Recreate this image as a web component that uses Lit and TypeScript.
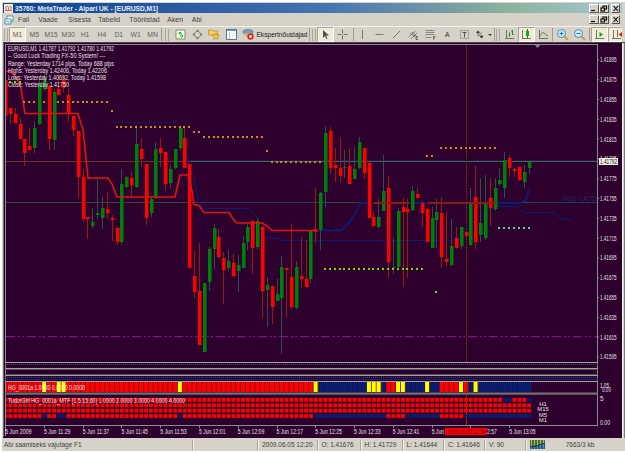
import {LitElement, html, svg, css} from 'lit';
import {customElement, property} from 'lit/decorators.js';
import {classMap} from 'lit/directives/class-map.js';

// direction, high, body top, body bottom, low
type Candle = [string, number, number, number, number];

const CANDLES: Candle[] = [
  ['r', 74, 80, 116, 116], ['r', 108, 108, 114, 124], ['r', 108, 114, 123, 123],
  ['r', 118, 124, 139, 139], ['r', 139, 139, 153, 166], ['r', 128, 146, 150, 150],
  ['g', 121, 128, 148, 153], ['g', 77, 84, 124, 125], ['g', 73, 79, 89, 91],
  ['r', 84, 86, 139, 150], ['g', 89, 92, 140, 150], ['r', 74, 89, 95, 95],
  ['r', 74, 80, 88, 92], ['r', 88, 95, 114, 122], ['r', 116, 116, 130, 136],
  ['r', 131, 131, 177, 198], ['r', 169, 177, 219, 222], ['r', 217, 217, 219, 239],
  ['g', 208, 222, 226, 228], ['g', 179, 213, 215, 219], ['g', 197, 208, 218, 229],
  ['r', 192, 209, 213, 219], ['r', 215, 218, 220, 241], ['r', 227, 228, 242, 245],
  ['g', 169, 184, 242, 245], ['g', 176, 177, 187, 188], ['r', 172, 178, 185, 196],
  ['g', 125, 144, 187, 188], ['r', 138, 149, 159, 167], ['r', 164, 164, 218, 225],
  ['g', 196, 199, 213, 217], ['g', 142, 149, 198, 199], ['r', 138, 148, 153, 167],
  ['r', 152, 152, 184, 190], ['g', 165, 169, 183, 188], ['g', 149, 149, 168, 169],
  ['g', 126, 128, 148, 150], ['r', 127, 138, 168, 168], ['r', 164, 164, 268, 268],
  ['r', 251, 276, 292, 298], ['r', 243, 291, 345, 345], ['g', 283, 283, 352, 352],
  ['g', 247, 249, 282, 291], ['g', 224, 228, 249, 269], ['r', 229, 237, 257, 258],
  ['r', 252, 258, 270, 304], ['g', 250, 261, 268, 271], ['r', 254, 263, 276, 277],
  ['g', 255, 265, 271, 292], ['g', 236, 243, 268, 268], ['g', 224, 227, 242, 250],
  ['r', 220, 221, 248, 274], ['g', 218, 221, 247, 249], ['r', 226, 227, 291, 318],
  ['g', 277, 285, 290, 327], ['r', 286, 286, 307, 324], ['g', 279, 294, 301, 301],
  ['g', 256, 267, 298, 354], ['r', 268, 268, 270, 317], ['r', 224, 277, 307, 309],
  ['g', 261, 267, 308, 309], ['r', 237, 276, 279, 288], ['r', 240, 279, 287, 287],
  ['g', 230, 231, 279, 283], ['r', 188, 229, 232, 243], ['g', 192, 193, 230, 250],
  ['g', 126, 133, 192, 207], ['r', 127, 131, 168, 174], ['r', 148, 165, 168, 182],
  ['r', 138, 168, 176, 182], ['g', 150, 167, 168, 178], ['r', 148, 166, 184, 184],
  ['g', 147, 169, 179, 179], ['g', 137, 142, 168, 169], ['r', 148, 148, 173, 179],
  ['r', 162, 163, 218, 218], ['r', 211, 217, 226, 227], ['g', 199, 217, 227, 228],
  ['g', 155, 191, 211, 211], ['r', 176, 188, 262, 277], ['g', 238, 267, 268, 274],
  ['g', 208, 211, 267, 268], ['r', 198, 207, 212, 287], ['r', 199, 209, 212, 278],
  ['g', 186, 191, 210, 211], ['r', 188, 194, 198, 198], ['r', 201, 203, 213, 227],
  ['r', 208, 209, 242, 242], ['g', 207, 218, 248, 248], ['g', 199, 212, 220, 248],
  ['r', 197, 213, 257, 268], ['r', 212, 259, 262, 266], ['g', 219, 246, 265, 266],
  ['r', 227, 238, 248, 248], ['g', 227, 227, 246, 249], ['r', 232, 232, 236, 237],
  ['g', 188, 203, 245, 246], ['r', 166, 197, 242, 249], ['g', 178, 223, 235, 242],
  ['g', 175, 203, 238, 240], ['r', 178, 198, 208, 226], ['g', 178, 188, 209, 211],
  ['g', 168, 180, 184, 185], ['g', 152, 160, 188, 198], ['r', 155, 158, 168, 177],
  ['r', 168, 169, 171, 177], ['r', 167, 167, 180, 181], ['g', 165, 172, 182, 188],
  ['g', 162, 162, 168, 174],
];

const STEP = 4.847;
const barX = (i: number) => 5.6 + i * STEP;

// y, first bar, last bar
const ORANGE = [
  [101.5, 4, 6], [101.5, 8, 8], [101.5, 11, 21], [110.5, 22, 22], [127, 23, 38],
  [132, 39, 40], [137, 41, 53], [150.5, 54, 54], [162, 55, 65], [156, 87, 88],
  [148, 90, 101],
];
const LIME = [[82, 1, 3], [268.5, 66, 86], [291.5, 89, 89]];
const AQUA = [[227.5, 102, 108]];

const YELLOW_BARS = [8, 11, 12, 36, 64, 75, 76, 77, 81, 82, 87, 94, 97];
const RED_BARS = [79, 80, 90, 91, 92, 93, 95];

const barColor = (i: number) =>
  YELLOW_BARS.includes(i) ? '#ff0' : i < 64 || RED_BARS.includes(i) ? '#f00' : '#0a1c6c';

const isRed = (row: number, i: number) => {
  if (row === 0) return ![103, 104, 108].includes(i);
  if (row < 3) return true;
  return (i < 64 && ![8, 11, 12, 36].includes(i)) || (i > 78 && i < 83) || (i > 89 && i < 95);
};

// one label for every eighth bar
const TIMES = ['2009', '11:29', '11:37', '11:45', '11:53', '12:01', '12:09', '12:17',
  '12:25', '12:33', '12:41', '12:49', '12:57', '13:05'];

const INFO: [string, number][] = [
  ['EURUSD,M1  1.41787 1.41792 1.41780 1.41792', 106],
  ['-- Good Luck Trading FX-50 System! ---', 97],
  ['Range: Yesterday 1714 pips, Today 688 pips', 106],
  ['Highs: Yesterday 1.42406, Today 1.42206', 99],
  ['Lows: Yesterday 1.40692, Today 1.41598', 98],
  ['Close: Yesterday 1.41750', 61],
];

@customElement('price-chart')
class PriceChart extends LitElement {
  static override styles = css`
    :host {
      display: block;
      background: #2e002e;
      overflow: hidden;
    }

    svg {
      display: block;
    }

    text {
      font-family: 'Liberation Sans', Arial, sans-serif;
      font-size: 6.3px;
      fill: #e4e4e4;
    }

    .line {
      fill: none;
    }

    .blue {
      stroke: #0a1e74;
    }

    .frame {
      stroke: #84908c;
      fill: none;
    }

    .crisp {
      shape-rendering: crispEdges;
    }

    .timeframe {
      font-size: 6px;
    }

    .level {
      fill: #1c3468;
    }

    .current {
      fill: #000;
    }

    .marked {
      fill: #7a0808;
    }
  `;

  private candle([dir, high, top, bottom, low]: Candle, i: number) {
    const x = Math.floor(barX(i));
    const left = Math.max(6, x - 1);
    const up = dir === 'g';
    return svg`
      <rect x=${x} y=${high} width="1" height=${low - high} fill=${up ? '#2c5048' : '#961a10'}></rect>
      <rect x=${left} y=${top} width=${x + 2 - left} height=${Math.max(1, bottom - top)}
        fill=${up ? '#008000' : '#f00'}></rect>
      <rect x=${x + 2} y=${top} width="1" height=${Math.max(1, bottom - top)}
        fill=${up ? '#0b4434' : '#8c0c10'}></rect>
    `;
  }

  private dots(rows: number[][], color: string) {
    return rows.map(([y, from, to]) =>
      Array.from({length: to - from + 1}, (_, n) => svg`
        <rect x=${Math.floor(barX(from + n)) - 1} y=${Math.round(y) - 1} width="2" height="2" fill=${color}></rect>
      `)
    );
  }

  private histogram() {
    return CANDLES.map((_, i) => svg`
      <rect x=${Math.max(6, barX(i) - 2.2)} y="382" width=${i ? STEP : 2.3} height="10" fill=${barColor(i)}></rect>
      ${barColor(i) === '#0a1c6c' ? '' : svg`
        <rect x=${barX(i) + 1.8} y="382" width="1" height="10" fill="#701410"></rect>`}
    `);
  }

  private matrix() {
    return [0, 1, 2, 3].map((row) =>
      CANDLES.map((_, i) => svg`
        <rect x=${Math.max(6, barX(i) - 2)} y=${398 + row * 5.4} width=${!i ? 1.6 : isRed(row, i) ? 3.9 : STEP}
          height="3.7" fill=${isRed(row, i) ? '#f00' : '#0a1c6c'}></rect>
      `)
    );
  }

  private priceAxis() {
    return Array.from({length: 16}, (_, i) => {
      const y = 60 + i * 19.8;
      return svg`
        <path class="frame" d="M597 ${y}h2"></path>
        <text x="600" y=${y + 2.3} textLength="16.5"
          lengthAdjust="spacingAndGlyphs">${(1.41895 - i * 0.0002).toFixed(5)}</text>
      `;
    });
  }

  private timeAxis() {
    return TIMES.map((time, i) => svg`
      <path class="frame crisp" d="M${barX(i * 8)} 425v3"></path>
      <text x=${barX(i * 8) - 0.5} y="433.5" textLength="26.5"
        lengthAdjust="spacingAndGlyphs">5 Jun ${time}</text>
    `);
  }

  override render() {
    return html`
      <svg width="619" height="395" viewBox="3 43 619 395">
        <g class="crisp">
          <path d="M190 160.5H597" stroke="#1a1650"></path>
          <path d="M6 161.5H190" stroke="#6a3424"></path>
          <path d="M190 161.5H597" stroke="#4a6456"></path>
          <path d="M6 202.5H597" stroke="#304a40"></path>
          <path d="M199 202.5H320M530 202.5H597" stroke="#123478" stroke-dasharray="1 1"></path>
          <path d="M6 336.5H597" stroke="#9c009c" stroke-dasharray="9 3 2 2 2 3"></path>
          <path d="M466.5 45V425" stroke="#96340e" stroke-dasharray="1 1"></path>
        </g>
        <g class="line blue">
          <path d="M109 121.5L116 122.5H178" stroke-dasharray="2 1"></path>
          <path d="M185 150L189 160L193 173L196 190L199 202L204 208.5H248L257 217L261 230L266 237L278 238.5L282 240.5H452L466 228L478 218L488 210L497 206.5H516L524 212.5H553L561 218.5L572 219.5"></path>
          <path d="M317 230.5H341L350 222L355 214L360 203H520L526 200L529 190" stroke-width="1.8"></path>
          <path d="M55 113.5H66"></path>
        </g>
        <g class="crisp">${CANDLES.map((c, i) => this.candle(c, i))}</g>
        <path class="line crisp" stroke="#8c1a14" stroke-width="2" d="M374 203H409M428 203H496"></path>
        <path class="line" stroke="#e01410" stroke-width="1.6"
          d="M6 71.5Q11 70.5 15 76T21 88L25 113.5H78L83 130L88 178H108L112 184L117 197H175L180 175H188L192 191L194 204.5L199 205.5L204 212.5H229L233 219L237 223H262L267 226L272 230.5H317"></path>
        <g class="crisp">
          ${this.dots(ORANGE, '#d88818')}
          ${this.dots(LIME, '#7cd800')}
          ${this.dots(AQUA, '#5cd0a0')}
          <path d="M3.5 43V437" stroke="#706870"></path>
          <path class="frame" d="M5.5 436V44.5H597.5V425.5H5.5"></path>
          <rect x="6" y="362" width="591" height="19" fill="#2e002e"></rect>
          <path stroke="#a0a4a0" d="M5 362.5H598M5 368.5H598M5 375.5H598M5 381.5H598"></path>
          <path stroke="#54504c" d="M5 369.5H598M5 374.5H598"></path>
          <path stroke="#385078" stroke-dasharray="1 1" d="M5 364.5H598M5 377.5H598"></path>
          <path stroke="#0a2880" d="M5 379.5H598"></path>
        </g>
        <path d="M535 45h5l-2.5 3z" fill="#7c9494"></path>
        ${this.histogram()}
        <rect x="5" y="392.5" width="593" height="2.2" fill="#727270"></rect>
        ${this.matrix()}
        <path class="crisp" d="M466.5 382V425" stroke="#7c2c14" stroke-dasharray="1 1"></path>
        ${INFO.map(([line, width], i) => svg`
          <text x="8" y=${51.3 + i * 7.1} textLength=${width} lengthAdjust="spacingAndGlyphs">${line}</text>
        `)}
        <text x="8" y="389.5" textLength="77" lengthAdjust="spacingAndGlyphs">HG_0001a 1.0000 0.0000 0.0000</text>
        <text x="8" y="402.5" textLength="177" lengthAdjust="spacingAndGlyphs">TudorGirl HG_0001a_MTF (1,5,15,60) 1.0000 2.0000 3.0000 4.0000 4.0000</text>
        ${['H1', 'M15', 'M5', 'M1'].map((label, i) => svg`
          <text class="timeframe" x="543" y=${405.6 + i * 5.5} text-anchor="middle">${label}</text>
        `)}
        <text class="level" x="563" y="201" textLength="34" lengthAdjust="spacingAndGlyphs">(H1:0) - 1.41753</text>
        ${this.priceAxis()}
        <rect x="599" y="158" width="19" height="7" fill="#f4f4ec"></rect>
        <text class="current" x="600" y="163.8" textLength="17" lengthAdjust="spacingAndGlyphs">1.41792</text>
        <text x="600" y="387.5" textLength="9" lengthAdjust="spacingAndGlyphs">1.05</text>
        <text x="602" y="391.8" textLength="9" lengthAdjust="spacingAndGlyphs">0.00</text>
        <text x="600" y="400.5">5</text>
        <text x="600" y="424.5" textLength="10" lengthAdjust="spacingAndGlyphs">0.00</text>
        ${this.timeAxis()}
        <rect x="445" y="428" width="42" height="7" fill="#f00"></rect>
        <text class="marked" x="447" y="433.5" textLength="38.5" lengthAdjust="spacingAndGlyphs">2009.06.05 12:50</text>
      </svg>
    `;
  }
}

const ICONS: Record<string, unknown> = {
  newChart: svg`<path d="M3 2h9v9H3z" fill="#f4fff0" stroke="#808a78"/><path d="M5.5 5.5L7 4l1.5 1.5M7 4v3M7 8h3M8.5 6.5L10 8 8.5 9.5" stroke="#18a018" fill="none"/><path d="M4 10h3" stroke="#e8c440"/>`,
  target: svg`<path d="M7.5 2v9M3 6.5h9" stroke="#888"/><circle cx="7.5" cy="6.5" r="3" stroke="#888" fill="#ddd8cc"/><path d="M6 3.5L7.5 1.5 9 3.5M6 9.5l1.5 2 1.5-2M4.5 5l-2 1.5 2 1.5M10.5 5l2 1.5-2 1.5" fill="#666"/>`,
  folder: svg`<path d="M1.5 2h4l1 1h4v4h-9z" fill="#f0d060" stroke="#b89028" stroke-width=".7"/><path d="M9 5l1 2 2.5.3-2 1.7.7 2.5L9 10.2l-2.2 1.3.7-2.5-2-1.7L8 7z" fill="#f8c830" stroke="#a87818" stroke-width=".5"/>`,
  panel: svg`<path d="M2.5 1.5h10v10h-10z" fill="#fff" stroke="#4878a0"/><path d="M3 2.5h9" stroke="#68a0d0"/><path d="M5.5 4v7" stroke="#a8c8e0"/><path d="M7 5.5h4M7 7.5h4" stroke="#d0d8e0" stroke-width=".6"/>`,
  expert: svg`<ellipse cx="7" cy="4" rx="5" ry="2.5" fill="#70a0c8" stroke="#38709c" stroke-width=".6"/><path d="M3 5.5q3 5 7 3.5l1-4z" fill="#e0b868"/><circle cx="9.5" cy="8.5" r="3.2" fill="#d02818"/><path d="M8.3 7.3h2.4v2.4H8.3z" fill="#fff"/>`,
  cursor: svg`<path d="M5 2v8l2-2 1.5 3 1-.5L8.2 7.5H11z" fill="#505050"/>`,
  cross: svg`<path d="M7.5 1.5v4M7.5 7.5v4M2.5 6.5h4M8.5 6.5h4" stroke="#707070"/>`,
  vertical: svg`<path d="M7.5 2v9" stroke="#777"/>`,
  horizontal: svg`<path d="M3.5 6.5h8" stroke="#777"/>`,
  trend: svg`<path d="M4 10l7-7" stroke="#777"/>`,
  channel: svg`<path d="M2.5 9l7-6M5 11l6-6M4 5l5 4M6 4l4 4" stroke="#666" stroke-width=".8"/><path d="M12 8.5h-2v3h2M10 10h1.5" stroke="#444" stroke-width=".7" fill="none"/>`,
  fibo: svg`<path d="M2.5 2.5h9M2.5 4.5h9M2.5 6.5h9M2.5 9.5h6" stroke="#777" stroke-width=".8"/><path d="M12.5 8.5h-2v3M10.5 10h1.5" stroke="#444" stroke-width=".7" fill="none"/>`,
  frame: svg`<path d="M3.5 2.5h8v8h-8z" fill="none" stroke="#777" stroke-dasharray="1 1"/><path d="M5.5 4.5h4M7.5 4.5v5" stroke="#555"/>`,
  arrows: svg`<path d="M3 4.5L5 2.5l2 2-2 1.5zM6.5 8.5l2-1.5 2 1.5-2 2z" fill="#444"/><path d="M4 7l1.5 1L8.5 4.5" stroke="#555" stroke-width=".9"/>`,
  bars: svg`<path d="M4.5 2v9M3 10.5h9" stroke="#666" stroke-width=".9"/><path d="M7.5 4.5v4M6.5 7.5h1M10.5 2v5M9 3h1.5M10.5 6.5h1" stroke="#189818" fill="none"/>`,
  candles: svg`<path d="M3.5 2v9M3 10.5h9" stroke="#666" stroke-width=".9"/><path d="M8.5 1v9" stroke="#108010"/><path d="M7 3h3v5H7z" fill="#10a818"/>`,
  line: svg`<path d="M3.5 2v9M3 10.5h9" stroke="#666" stroke-width=".9"/><path d="M3.5 9Q6 3 8 5t4 3" stroke="#589058" fill="none"/>`,
  zoomIn: svg`<path d="M9 8l4 4" stroke="#d0a030" stroke-width="2"/><circle cx="6.5" cy="5.5" r="4" fill="#d0ecfc" stroke="#4890b8"/><path d="M4.5 5.5h4M6.5 3.5v4" stroke="#2870a0"/>`,
  zoomOut: svg`<path d="M9 8l4 4" stroke="#d0a030" stroke-width="2"/><circle cx="6.5" cy="5.5" r="4" fill="#d0ecfc" stroke="#4890b8"/><path d="M4.5 5.5h4" stroke="#2870a0"/>`,
  scroll: svg`<path d="M4.5 2v9M3 10.5h9" stroke="#666" stroke-width=".9"/><path d="M7.5 4l3.5 2.5L7.5 9z" fill="#18a020"/>`,
  shift: svg`<path d="M4.5 2v9M3 10.5h9M8.5 2v7" stroke="#666" stroke-width=".9"/><path d="M13 4L9.5 6.5 13 9z" fill="#d02818"/>`,
};

@customElement('tool-button')
class ToolButton extends LitElement {
  static override styles = css`
    :host {
      display: block;
      flex: none;
      width: 16.9px;
    }

    .tool {
      box-sizing: border-box;
      height: 15px;
      display: flex;
      align-items: center;
      justify-content: center;
      font: 6.8px 'Liberation Sans', Arial, sans-serif;
      color: #606060;
    }

    .pressed {
      background: #f0ecd8;
      border: 1px solid;
      border-color: #a8a498 #fff #fff #a8a498;
    }

    .bold {
      font-weight: bold;
    }

    svg {
      flex: none;
    }
  `;

  @property()
  icon = '';

  @property()
  label = '';

  @property({type: Boolean})
  pressed = false;

  override render() {
    return html`
      <div class=${classMap({tool: true, pressed: this.pressed, bold: this.label === 'A'})}>
        ${this.icon
          ? html`<svg width="15" height="13" viewBox="0 0 15 13" fill="none">${ICONS[this.icon]}</svg>`
          : this.label}
      </div>
    `;
  }
}

@customElement('window-buttons')
class WindowButtons extends LitElement {
  static override styles = css`
    :host {
      display: flex;
      margin-left: auto;
      gap: 0.5px;
    }

    .button {
      box-sizing: border-box;
      width: 9.5px;
      height: 9px;
      background: #d6d2c8;
      border: 1px solid;
      border-color: #fff #55524c #55524c #fff;
    }

    .button:last-child {
      margin-left: 1.5px;
    }

    svg {
      display: block;
    }
  `;

  override render() {
    return html`
      ${['M1 5.5h4', 'M3 2.5V1h3.5v3H5M1 3h3.5v3H1z', 'M1.5 1l4.5 5M6 1L1.5 6'].map((d) => html`
        <div class="button">
          <svg width="7.5" height="7" viewBox="0 0 7.5 7"><path d=${d} fill="none" stroke="#000" stroke-width="1.1" /></svg>
        </div>
      `)}
    `;
  }
}

@customElement('app-root')
class AppRoot extends LitElement {
  static override styles = css`
    :host {
      display: block;
      box-sizing: border-box;
      width: 625px;
      height: 452px;
      padding: 2px 0 0 2px;
      background: #fff;
      overflow: hidden;
      font: 6.9px 'Liberation Sans', Arial, sans-serif;
      color: #404040;
      white-space: nowrap;
    }

    .window {
      width: 623px;
      height: 449px;
      box-sizing: border-box;
      padding: 1px 0 0 1px;
      background: #d6d2c8;
    }

    .title {
      display: flex;
      align-items: center;
      width: 616px;
      height: 10px;
      padding: 0 2px 0 1px;
      background: linear-gradient(90deg, #0c4590 0%, #2c5ca4 30%, #4474b0 52%, #6c94a8 68%, #8cb49c 82%, #a4c8d8 100%);
    }

    .title__text {
      margin-left: 2px;
      color: #e4ecf4;
      font-size: 6.7px;
      font-weight: bold;
      letter-spacing: -0.03px;
    }

    .menu {
      display: flex;
      align-items: center;
      width: 616px;
      height: 13px;
      padding: 0 2px 0 1px;
    }

    .menu svg {
      margin-right: 4px;
    }

    .toolbar {
      display: flex;
      align-items: center;
      width: 619px;
      height: 16px;
      overflow: hidden;
      border-top: 1px solid #f4f2ec;
      box-sizing: border-box;
    }

    .grip {
      flex: none;
      box-sizing: border-box;
      width: 4px;
      height: 12px;
      margin: 0 1px;
      border: solid #aaa69c;
      border-width: 0 1px;
    }

    .grip--wide {
      margin: 0 3px;
    }

    .grip--drawing {
      margin: 0 1px 0 2px;
    }

    .separator {
      flex: none;
      width: 1px;
      height: 13px;
      background: #a09c90;
    }

    .separator--cross {
      margin-left: 2px;
    }

    .separator--zoom {
      margin-right: 1px;
    }

    .separator--scroll {
      margin: 0 1px;
    }

    .experts {
      width: 53px;
      flex: none;
      font-size: 6.6px;
      color: #202020;
    }

    .drop {
      border: 2px solid transparent;
      border-top: 2.5px solid #333;
      border-bottom: 0;
      margin: 0 2px 0 -1px;
    }

    .body {
      display: flex;
      border-top: 1px solid #484448;
    }

    .edge {
      width: 3px;
      box-sizing: border-box;
      border-left: 1px solid #f8f6f0;
      border-right: 1px solid #807c78;
    }

    .status {
      display: flex;
      align-items: center;
      height: 13px;
      font-size: 6.5px;
    }

    .status__cell {
      box-sizing: border-box;
      flex: none;
      padding-left: 4px;
      border-left: 1px solid #a8a498;
      box-shadow: inset 1px 0 #f4f2ec;
      height: 10px;
      line-height: 10px;
    }

    .status__cell:first-child {
      border: 0;
      box-shadow: none;
      padding-left: 1px;
    }

    .traffic {
      width: 70px;
      text-align: center;
    }
  `;

  private menus: [string, number][] = [
    ['Fail', 20.3], ['Vaade', 30], ['Sisesta', 30], ['Tabelid', 31],
    ['Tööriistad', 38], ['Aken', 24.5], ['Abi', 20],
  ];

  private cells: [string, number][] = [
    ['Abi saamiseks vajutage F1', 189], ['', 65], ['2009.06.05 12:20', 59.5],
    ['O: 1.41676', 43], ['H: 1.41729', 42], ['L: 1.41644', 41.5],
    ['C: 1.41646', 41], ['V: 90', 41],
  ];

  override render() {
    return html`
      <div class="window">
        <div class="title">
          <svg width="9" height="9" viewBox="0 0 9 9">
            <rect width="9" height="9" fill="#f4e8e4" />
            <path d="M1 4l2-2 1.5 1.5L6 2l2 2M1 6.5h7M2 4v2M4.5 4v2M7 4v2" stroke="#d04840" fill="none" stroke-width=".8" />
          </svg>
          <span class="title__text">35760: MetaTrader - Alpari UK - [EURUSD,M1]</span>
          <window-buttons></window-buttons>
        </div>
        <div class="menu">
          <svg width="10" height="10" viewBox="0 0 10 10">
            <path d="M3 1h6v5H3z" fill="#fff" stroke="#4888b0" stroke-width=".9" />
            <path d="M1 4h6v5H1z" fill="#e8f8ff" stroke="#4888b0" stroke-width=".9" />
            <path d="M2 7l1.5-1 1 1.5L6 6" stroke="#489058" fill="none" stroke-width=".7" />
          </svg>
          ${this.menus.map(([label, width]) => html`<span style="width:${width}px">${label}</span>`)}
          <window-buttons></window-buttons>
        </div>
        <div class="toolbar">
          <div class="grip"></div>
          ${['M1', 'M5', 'M15', 'M30', 'H1', 'H4', 'D1', 'W1', 'MN'].map(
            (label) => html`<tool-button label=${label} ?pressed=${label === 'M1'}></tool-button>`
          )}
          <div class="separator"></div>
          <div class="grip grip--wide"></div>
          ${['newChart', 'target', 'folder', 'panel', 'expert'].map(
            (icon) => html`<tool-button icon=${icon}></tool-button>`
          )}
          <span class="experts">Ekspertnõustajad</span>
          <div class="separator"></div>
          <div class="grip grip--drawing"></div>
          <tool-button icon="cursor" pressed></tool-button>
          <tool-button icon="cross"></tool-button>
          <div class="separator separator--cross"></div>
          ${['vertical', 'horizontal', 'trend', 'channel', 'fibo'].map(
            (icon) => html`<tool-button icon=${icon}></tool-button>`
          )}
          <tool-button label="A"></tool-button>
          <tool-button icon="frame"></tool-button>
          <tool-button icon="arrows"></tool-button>
          <div class="drop"></div>
          <div class="separator"></div>
          <div class="grip"></div>
          <tool-button icon="bars"></tool-button>
          <tool-button icon="candles" pressed></tool-button>
          <tool-button icon="line"></tool-button>
          <div class="separator separator--zoom"></div>
          <tool-button icon="zoomIn"></tool-button>
          <tool-button icon="zoomOut"></tool-button>
          <div class="separator separator--scroll"></div>
          <tool-button icon="scroll" pressed></tool-button>
          <tool-button icon="shift" pressed></tool-button>
        </div>
        <div class="body">
          <price-chart></price-chart>
          <div class="edge"></div>
        </div>
        <div class="status">
          ${this.cells.map(([text, width]) => html`<span class="status__cell" style="width:${width}px">${text}</span>`)}
          <span class="status__cell">
            <svg width="15" height="9" viewBox="0 0 15 9">
              <rect width="15" height="9" fill="#203c58" />
              <path d="M1.5 0v6M4.5 0v5.5M7.5 0v5M10.5 0v4M13.5 0v3" stroke="#a8c828" stroke-width="1.6" />
              <path d="M1.5 7v2M4.5 7v2M7.5 6v3M10.5 5v4M13.5 4v5" stroke="#4890c0" stroke-width="1.6" />
            </svg>
          </span>
          <span class="traffic">7663/3 kb</span>
        </div>
      </div>
    `;
  }
}

declare global {
  interface HTMLElementTagNameMap {
    'app-root': AppRoot;
    'price-chart': PriceChart;
    'tool-button': ToolButton;
    'window-buttons': WindowButtons;
  }
}
